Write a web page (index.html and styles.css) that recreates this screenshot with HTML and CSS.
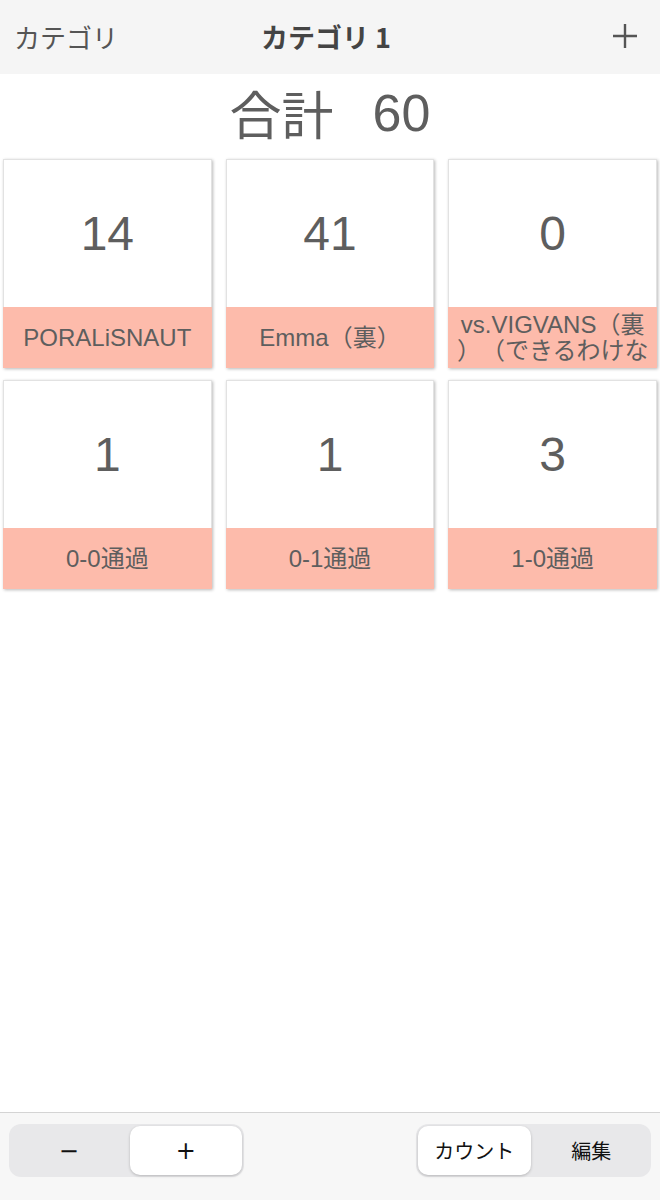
FILE: index.html
```html
<!DOCTYPE html>
<html lang="ja">
<head>
<meta charset="utf-8">
<link rel="stylesheet" href="styles.css">
</head>
<body>
<div class="app">
  <header class="nav">
    <span class="nav-back">カテゴリ</span>
    <span class="nav-title">カテゴリ 1</span>
    <span class="nav-add">
      <svg width="26" height="26" viewBox="0 0 26 26"><path d="M13 1V25M1 13H25" stroke="#555" stroke-width="2.4" fill="none"/></svg>
    </span>
  </header>
  <div class="total"><span class="total-label">合計</span><span class="total-num">60</span></div>
  <main class="grid">
    <div class="card"><div class="card-count">14</div><div class="card-label"><span class="label-text">PORALiSNAUT</span></div></div>
    <div class="card"><div class="card-count">41</div><div class="card-label"><span class="label-text">Emma（裏）</span></div></div>
    <div class="card"><div class="card-count">0</div><div class="card-label"><span class="label-text">vs.VIGVANS（裏）（できるわけない）</span></div></div>
    <div class="card"><div class="card-count">1</div><div class="card-label"><span class="label-text">0-0通過</span></div></div>
    <div class="card"><div class="card-count">1</div><div class="card-label"><span class="label-text">0-1通過</span></div></div>
    <div class="card"><div class="card-count">3</div><div class="card-label"><span class="label-text">1-0通過</span></div></div>
  </main>
  <footer class="toolbar">
    <div class="seg seg-step">
      <div class="seg-item">−</div>
      <div class="seg-item seg-on">+</div>
    </div>
    <div class="seg seg-mode">
      <div class="seg-item seg-on">カウント</div>
      <div class="seg-item">編集</div>
    </div>
  </footer>
</div>
</body>
</html>
```
FILE: styles.css
```css
* { box-sizing: border-box; }
html, body { margin: 0; padding: 0; background: #fff; }
body {
  font-family: "Liberation Sans", "Noto Sans CJK JP", sans-serif;
  color: #5c5c5c;
}
.app {
  width: 660px;
  height: 1200px;
  display: flex;
  flex-direction: column;
}
.nav {
  height: 74px;
  background: #f5f5f5;
  display: grid;
  grid-template-columns: 1fr auto 1fr;
  align-items: center;
  padding: 0 22px 0 14px;
}
.nav-back {
  font-family: "Noto Sans CJK JP", sans-serif;
  font-size: 26px;
  color: #555;
  justify-self: start;
  margin-top: -2px;
}
.nav-title {
  font-family: "Noto Sans CJK JP", sans-serif;
  font-weight: 700;
  font-size: 27px;
  color: #444;
  margin-top: -2px;
}
.nav-add {
  justify-self: end;
  display: flex;
  margin-top: -2px;
}
.total {
  height: 78px;
  display: flex;
  justify-content: center;
  align-items: center;
  gap: 39px;
  font-size: 52px;
  color: #5e5e5e;
}
.total-label { font-family: "Noto Sans CJK JP", sans-serif; line-height: 1; }
.total-num { line-height: 1; }
.grid {
  display: grid;
  grid-template-columns: repeat(3, 1fr);
  column-gap: 14px;
  row-gap: 12px;
  padding: 7px 3px 0 3px;
}
.card {
  height: 209px;
  display: flex;
  flex-direction: column;
  background: #fff;
  border: 1px solid #e2e2e2;
  box-shadow: 1px 1px 3px rgba(0,0,0,0.28);
}
.card-count {
  flex: 1;
  display: flex;
  align-items: center;
  justify-content: center;
  font-size: 48px;
  color: #5e5e5e;
}
.card-label {
  height: 61px;
  background: #fdbbab;
  display: flex;
  align-items: center;
  justify-content: center;
  text-align: center;
  overflow: hidden;
  margin: 0 -1px -1px -1px;
}
.label-text {
  font-size: 24px;
  line-height: 26px;
  max-height: 52px;
  overflow: hidden;
  color: #5e5e5e;
  padding: 0 3px;
  line-break: anywhere;
  text-spacing-trim: space-all;
}
.toolbar {
  margin-top: auto;
  height: 88px;
  background: #f7f7f7;
  border-top: 1px solid #d4d4d4;
  display: flex;
  justify-content: space-between;
  align-items: flex-start;
  padding: 11px 9px 0 9px;
}
.seg {
  width: 235px;
  height: 53px;
  background: #e8e8ea;
  border-radius: 12px;
  padding: 2px;
  display: grid;
  grid-template-columns: 1fr 1fr;
}
.seg-item {
  display: flex;
  align-items: center;
  justify-content: center;
  font-family: "Noto Sans CJK JP", sans-serif;
  font-size: 20px;
  color: #111;
  border-radius: 10px;
}
.seg-step .seg-item { font-family: "DejaVu Sans", sans-serif; font-size: 24px; }
.seg-on {
  background: #fff;
  box-shadow: 0 1px 3px rgba(0,0,0,0.22);
}
.seg-step .seg-on { margin-left: 3px; }
.seg-mode .seg-on { margin-right: 3px; }
```
